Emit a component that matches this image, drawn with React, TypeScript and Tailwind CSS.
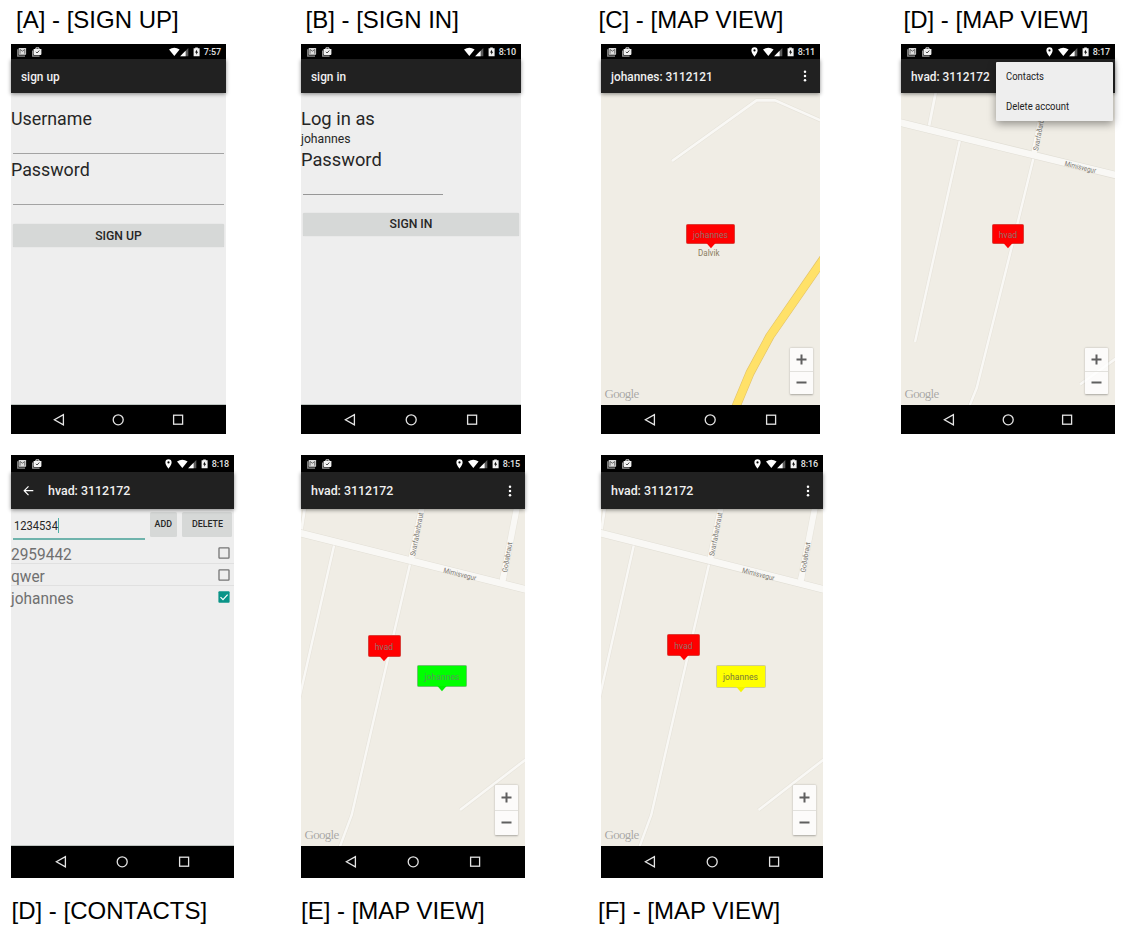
import React from "react";

type Size = "sm" | "lg";

function MailIcon() {
  return (
    <svg width="10" height="10" viewBox="0 0 10 10" fill="none">
      <path d="M0.8 2.2V9.1H8" stroke="#8f8f8f" strokeWidth="1.3" />
      <rect x="1.7" y="0.9" width="7.4" height="6.8" rx="0.6" fill="#dcdcdc" />
      <path d="M3 6.7V2.5L5.4 4.2L7.8 2.5V6.7" stroke="#5a5a5a" strokeWidth="0.9" />
    </svg>
  );
}

function WorkIcon() {
  return (
    <svg width="10" height="10" viewBox="0 0 10 10" fill="none">
      <path d="M0.7 3.4V9.1H7.6" stroke="#a0a0a0" strokeWidth="1.2" />
      <path d="M3.9 2.2V0.9H7V2.2" stroke="#f0f0f0" strokeWidth="1" />
      <path d="M1.6 1.9H9.4V7.3L8.8 7.9H2.2L1.6 7.3Z" fill="#f4f4f4" />
      <path d="M3.9 4.8L5.1 6L7.3 3.5" stroke="#333" strokeWidth="0.9" />
    </svg>
  );
}

function StatusBar({ size, time, gps = false }: { size: Size; time: string; gps?: boolean }) {
  return (
    <div
      className={`flex shrink-0 items-center bg-black pl-[6px] pr-[5px] text-white ${
        size === "sm" ? "h-[15px]" : "h-[17px]"
      }`}
    >
      <MailIcon />
      <div className="w-[4.5px]" />
      <WorkIcon />
      <div className="flex-1" />
      {gps && (
        <svg className="mr-[5px]" width="7" height="10" viewBox="0 0 7 10">
          <path
            d="M3.5 0.3A3.1 3.1 0 0 0 0.4 3.4C0.4 5.6 3.5 9.6 3.5 9.6S6.6 5.6 6.6 3.4A3.1 3.1 0 0 0 3.5 0.3ZM3.5 4.5A1.1 1.1 0 1 1 3.5 2.3A1.1 1.1 0 0 1 3.5 4.5Z"
            fill="#fff"
          />
        </svg>
      )}
      <svg width="20" height="10" viewBox="0 0 20 10">
        <path d="M0 2.5Q5.3 -1.2 10.6 2.5L5.3 9Z" fill="#fff" />
        <path d="M19.3 1V9.2H11.2Z" fill="#5c5c5c" />
        <path d="M16.6 3.7V9.2H11.2Z" fill="#fff" />
      </svg>
      <svg className="ml-[4px] mr-[3px]" width="7" height="10" viewBox="0 0 7 10">
        <path d="M2.2 0.4H4.8V1.2H6.6V9.3H0.6V1.2H2.2Z" fill="#f2f2f2" />
        <path d="M4.1 2.6L2 5.6H3.3V7.8L5.1 4.8H3.9Z" fill="#000" />
      </svg>
      <span className="w-[18px] text-right text-[9px] font-medium leading-[10px] tracking-[-0.1px] text-[#e4e4e4]">
        {time}
      </span>
    </div>
  );
}

function AppBar({
  size,
  title,
  back = false,
  menu = false,
}: {
  size: Size;
  title: string;
  back?: boolean;
  menu?: boolean;
}) {
  return (
    <div
      className={`relative z-10 flex shrink-0 items-center bg-[#212121] shadow-[0_1px_4px_rgba(0,0,0,0.45)] ${
        size === "sm" ? "h-[34px]" : "h-[37px]"
      } ${back ? "pl-[12px]" : "pl-[9.5px]"}`}
    >
      {back && (
        <svg className="mr-[14px]" width="11" height="12" viewBox="0 0 11 12" fill="none">
          <path d="M10.3 5.7H1.4M5.5 1.3L1.2 5.7L5.5 10.1" stroke="#fff" strokeWidth="1.2" />
        </svg>
      )}
      <span
        className={`origin-left whitespace-nowrap pt-px font-medium leading-[16px] text-[#f0f0f0] ${
          size === "sm" ? "scale-x-[0.965] text-[12.3px]" : "scale-x-[0.94] text-[13.2px]"
        }`}
      >
        {title}
      </span>
      <div className="flex-1" />
      {menu && (
        <svg className="mr-[13px]" width="4" height="14" viewBox="0 0 4 14" fill="#fff">
          <circle cx="2" cy="2.7" r="1.25" />
          <circle cx="2" cy="7" r="1.25" />
          <circle cx="2" cy="11.3" r="1.25" />
        </svg>
      )}
    </div>
  );
}

function NavBar({ size }: { size: Size }) {
  return (
    <div
      className={`grid shrink-0 grid-cols-3 place-items-center bg-black px-[8.4%] ${
        size === "sm" ? "h-[29px]" : "h-[32px]"
      }`}
    >
      <svg width="14" height="14" viewBox="0 0 14 14" fill="none" stroke="#e4e4e4" strokeWidth="1.3">
        <path d="M11.4 1.6V11.8L2.4 6.7Z" />
      </svg>
      <svg width="14" height="14" viewBox="0 0 14 14" fill="none" stroke="#e4e4e4" strokeWidth="1.3">
        <circle cx="7.2" cy="6.8" r="5" />
      </svg>
      <svg width="14" height="14" viewBox="0 0 14 14" fill="none" stroke="#e4e4e4" strokeWidth="1.3">
        <rect x="2.6" y="2.2" width="9" height="9" />
      </svg>
    </div>
  );
}

function Phone({
  size,
  width,
  children,
}: {
  size: Size;
  width: string;
  children: React.ReactNode;
}) {
  return (
    <div className={`relative flex flex-col ${size === "sm" ? "h-[390px]" : "h-[423px]"} ${width}`}>
      {children}
    </div>
  );
}

function Body({ children }: { children: React.ReactNode }) {
  return (
    <div className="min-h-0 flex-1 border-b border-[#bfc5c2] bg-[#eeeeee] text-[#262626]">{children}</div>
  );
}

function MapBody({ children }: { children: React.ReactNode }) {
  return <div className="relative min-h-0 flex-1 overflow-hidden bg-[#f0ede5]">{children}</div>;
}

function Pin({
  place,
  colors,
  tip,
  name,
}: {
  place: string;
  colors: string;
  tip: string;
  name: string;
}) {
  return (
    <div className={`absolute flex flex-col items-center ${place}`}>
      <div
        className={`flex w-full flex-1 items-center justify-center rounded-[1.5px] border pt-px text-[8.6px] leading-[10px] ${colors}`}
      >
        {name}
      </div>
      <svg className="-mt-px shrink-0" width="10" height="6" viewBox="0 0 10 6">
        <path d="M0.4 0H9.6L5 5.2Z" className={tip} />
      </svg>
    </div>
  );
}

const RED = "border-[#d8403a] bg-[#ff0000] text-[#94706a]";

function ZoomControl({ size }: { size: Size }) {
  const cell =
    size === "sm" ? "flex h-[23px] items-center justify-center" : "flex h-[25px] items-center justify-center";
  return (
    <div className="absolute bottom-[11.5px] right-[7.5px] w-[23px] rounded-[1px] bg-white/80 shadow-[0_0.5px_2px_rgba(0,0,0,0.3)]">
      <div className={cell}>
        <svg width="11" height="11" viewBox="0 0 11 11" stroke="#5f5f5f" strokeWidth="2">
          <path d="M5.5 0.5V10.5M0.5 5.5H10.5" />
        </svg>
      </div>
      <div className={`${cell} border-t border-[#e2e1dd]`}>
        <svg width="11" height="11" viewBox="0 0 11 11" stroke="#5f5f5f" strokeWidth="2">
          <path d="M0.5 5.5H10.5" />
        </svg>
      </div>
    </div>
  );
}

function Road({ d, w }: { d: string; w: number }) {
  return (
    <>
      <path d={d} stroke="#e6e3da" strokeWidth={w + 1.1} fill="none" />
      <path d={d} stroke="#f9f8f5" strokeWidth={w} fill="none" />
    </>
  );
}

function StreetName({
  x,
  y,
  angle,
  length,
  children,
}: {
  x: number;
  y: number;
  angle: number;
  length: number;
  children: string;
}) {
  return (
    <text
      transform={`translate(${x} ${y}) rotate(${angle})`}
      fontSize="7.2"
      fill="#7a766e"
      textLength={length}
      lengthAdjust="spacingAndGlyphs"
    >
      {children}
    </text>
  );
}

function GoogleMark({ size }: { size: Size }) {
  return (
    <div
      className={`absolute left-[3.5px] font-['Liberation_Serif',serif] text-[13px] leading-[14px] tracking-[-0.7px] text-[#a9a7a2] [text-shadow:0_0_1px_#fff] ${
        size === "sm" ? "bottom-[4px]" : "bottom-[4.5px]"
      }`}
    >
      Google
    </div>
  );
}

function VillageMap() {
  return (
    <svg className="block h-full w-full" viewBox="601 93 219 312" preserveAspectRatio="none">
      <Road d="M672 161L756.5 100.3H775L822 121" w={2.7} />
      <path
        d="M824 258L770 336L750 373L735 409"
        fill="none"
        stroke="#e3c36a"
        strokeWidth="9"
        strokeLinejoin="round"
      />
      <path
        d="M824 258L770 336L750 373L735 409"
        fill="none"
        stroke="#ffe168"
        strokeWidth="7.8"
        strokeLinejoin="round"
      />
      <text
        x="698"
        y="256.2"
        fontSize="8.4"
        fill="#8a7c5e"
        textLength="21.5"
        lengthAdjust="spacingAndGlyphs"
      >
        Dalvik
      </text>
    </svg>
  );
}

function NearStreetsMap() {
  return (
    <svg className="block h-full w-full" viewBox="901 93 214 312" preserveAspectRatio="none">
      <Road d="M936 91L928.6 128" w={2.8} />
      <Road d="M960 140L915 342" w={2.5} />
      <Road d="M1033.5 158L1011 250L976.7 388L969 407" w={2.5} />
      <Road d="M1046 93L1033.7 155" w={5.4} />
      <Road d="M1080 384.5L1116 358.5" w={2.6} />
      <path d="M898 122L1118 175.7" stroke="#e1ded5" strokeWidth="7.8" />
      <path d="M898 122L1118 175.7" stroke="#f9f8f5" strokeWidth="6.6" />
      <path d="M1035.5 146L1033.7 155" stroke="#f9f8f5" strokeWidth="5.4" />
      <StreetName x={1038} y={151} angle={-79} length={43}>
        Svarfaðarbraut
      </StreetName>
      <StreetName x={1064.3} y={165.8} angle={13.5} length={32}>
        Mimisvegur
      </StreetName>
    </svg>
  );
}

function StreetsMap() {
  return (
    <svg className="block h-full w-full" viewBox="301 509 224 337" preserveAspectRatio="none">
      <Road d="M305 507L301.5 530" w={2.8} />
      <Road d="M334.6 543L299 700" w={2.5} />
      <Road d="M410.5 562L378.3 700L351.7 815L339 849" w={2.5} />
      <Road d="M422 507L411 560" w={5.8} />
      <Road d="M517 507L502 584" w={6} />
      <Road d="M460 810L527 758.5" w={2.6} />
      <path d="M298 532.5L528 590" stroke="#e1ded5" strokeWidth="8" />
      <path d="M298 532.5L528 590" stroke="#f9f8f5" strokeWidth="6.8" />
      <path d="M412.6 552L411 560M503.6 576L502 584" stroke="#f9f8f5" strokeWidth="5.8" />
      <StreetName x={415} y={556.3} angle={-79} length={44}>
        Svarfaðarbraut
      </StreetName>
      <StreetName x={507} y={572.7} angle={-80} length={30.5}>
        Goðabraut
      </StreetName>
      <StreetName x={443} y={572.5} angle={14} length={33.5}>
        Mimisvegur
      </StreetName>
    </svg>
  );
}

function Caption({ className, children }: { className: string; children: string }) {
  return (
    <div
      className={`whitespace-nowrap font-['Liberation_Sans',Arial,sans-serif] text-[24px] leading-[28px] text-black ${className}`}
    >
      {children}
    </div>
  );
}

function FieldLabel({ className, children }: { className: string; children: string }) {
  return <div className={`origin-left text-[18px] leading-[20px] ${className}`}>{children}</div>;
}

function WideButton({ className, children }: { className: string; children: string }) {
  return (
    <div
      className={`mx-[2px] flex h-[23px] items-center justify-center rounded-[1.5px] bg-[#d6d8d7] text-[12.2px] font-medium leading-[16px] shadow-[0_0_1px_rgba(0,0,0,0.2)] ${className}`}
    >
      {children}
    </div>
  );
}

function SignUp() {
  return (
    <Phone size="sm" width="w-[215px]">
      <StatusBar size="sm" time="7:57" />
      <AppBar size="sm" title="sign up" />
      <Body>
        <FieldLabel className="mt-[16px] scale-x-[0.99]">Username</FieldLabel>
        <div className="mx-[2px] mt-[24px] h-px bg-[#a3a3a3]" />
        <FieldLabel className="mt-[6px] scale-x-[0.99]">Password</FieldLabel>
        <div className="mx-[2px] mt-[24px] h-px bg-[#a3a3a3]" />
        <WideButton className="mt-[19px]">SIGN UP</WideButton>
      </Body>
      <NavBar size="sm" />
    </Phone>
  );
}

function SignIn() {
  return (
    <Phone size="sm" width="w-[220px]">
      <StatusBar size="sm" time="8:10" />
      <AppBar size="sm" title="sign in" />
      <Body>
        <FieldLabel className="mt-[16px] scale-x-[1.02]">Log in as</FieldLabel>
        <div className="mt-[2.4px] text-[12.2px] leading-[16px]">johannes</div>
        <FieldLabel className="mt-[2.6px] scale-x-[1.015]">Password</FieldLabel>
        <div className="ml-[2px] mt-[24px] h-px w-[140px] bg-[#979797]" />
        <WideButton className="mt-[18px]">SIGN IN</WideButton>
      </Body>
      <NavBar size="sm" />
    </Phone>
  );
}

const contacts = [
  { name: "2959442", checked: false },
  { name: "qwer", checked: false },
  { name: "johannes", checked: true },
];

function Contacts() {
  return (
    <Phone size="lg" width="w-[223px]">
      <StatusBar size="lg" time="8:18" gps />
      <AppBar size="lg" title="hvad: 3112172" back />
      <Body>
        <div className="flex h-[33.5px] items-start pl-[2px] pr-[2px] pt-[3px]">
          <div className="flex h-[28px] w-[132px] items-center border-b-2 border-[#6fb3ac]">
            <span className="inline-block origin-left scale-x-[0.94] pl-[1px] pt-px text-[11.9px] leading-[16px]">
              1234534
            </span>
            <span className="-ml-[3px] h-[15px] w-[1.5px] bg-[#4fb0a6]" />
          </div>
          <div className="ml-[5px] flex h-[25px] w-[27px] items-center justify-center rounded-[1.5px] bg-[#d6d8d7] text-[9.4px] font-medium">
            <span className="scale-x-[0.94]">ADD</span>
          </div>
          <div className="ml-[5px] flex h-[25px] flex-1 items-center justify-center rounded-[1.5px] bg-[#d6d8d7] text-[9.4px] font-medium">
            <span className="scale-x-[0.94]">DELETE</span>
          </div>
        </div>
        {contacts.map((c, i) => (
          <div
            key={c.name}
            className={`flex h-[21.7px] items-center justify-between pr-[4px] ${
              i < 2 ? "border-b border-[#e0e0e0]" : ""
            }`}
          >
            <span className="origin-left scale-x-[0.92] pt-[2px] text-[16.8px] leading-[20px] text-[#707070]">
              {c.name}
            </span>
            <svg width="12" height="12" viewBox="0 0 12 12" fill="none">
              {c.checked ? (
                <>
                  <rect x="0.4" y="0.2" width="11.2" height="11.6" rx="1" fill="#0a9488" />
                  <path d="M2.5 6.1L5 8.7L9.6 3.6" stroke="#fff" strokeWidth="1.2" />
                </>
              ) : (
                <rect x="1" y="0.8" width="10" height="10.4" rx="0.6" stroke="#757575" strokeWidth="1.3" />
              )}
            </svg>
          </div>
        ))}
      </Body>
      <NavBar size="lg" />
    </Phone>
  );
}

function VillageScreen() {
  return (
    <Phone size="sm" width="w-[219px]">
      <StatusBar size="sm" time="8:11" gps />
      <AppBar size="sm" title="johannes: 3112121" menu />
      <MapBody>
        <VillageMap />
        <GoogleMark size="sm" />
        <ZoomControl size="sm" />
        <Pin place="left-[85px] top-[131px] h-[25px] w-[49px]" colors={RED} tip="fill-[#ff0000]" name="johannes" />
      </MapBody>
      <NavBar size="sm" />
    </Phone>
  );
}

function MenuScreen() {
  return (
    <Phone size="sm" width="w-[214px]">
      <StatusBar size="sm" time="8:17" gps />
      <AppBar size="sm" title="hvad: 3112172" />
      <MapBody>
        <NearStreetsMap />
        <GoogleMark size="sm" />
        <ZoomControl size="sm" />
        <Pin place="left-[91px] top-[131px] h-[25px] w-[32px]" colors={RED} tip="fill-[#ff0000]" name="hvad" />
      </MapBody>
      <NavBar size="sm" />
      <div className="absolute right-[2px] top-[17.5px] z-20 flex h-[59px] w-[117px] flex-col rounded-[1px] bg-[#eeeeee] pl-[9.5px] text-[10.2px] text-[#222] shadow-[0_3px_8px_rgba(0,0,0,0.4)]">
        <div className="flex h-[30px] origin-left scale-x-[0.93] items-center pt-px">Contacts</div>
        <div className="flex h-[29px] origin-left scale-x-[0.93] items-center pt-px">Delete account</div>
      </div>
    </Phone>
  );
}

function FriendScreen({
  width,
  time,
  pins,
}: {
  width: string;
  time: string;
  pins: React.ReactNode;
}) {
  return (
    <Phone size="lg" width={width}>
      <StatusBar size="lg" time={time} gps />
      <AppBar size="lg" title="hvad: 3112172" menu />
      <MapBody>
        <StreetsMap />
        <GoogleMark size="lg" />
        <ZoomControl size="lg" />
        {pins}
      </MapBody>
      <NavBar size="lg" />
    </Phone>
  );
}

export default function App() {
  return (
    <div className="flex h-[936px] w-[1130px] flex-col overflow-hidden bg-white pl-[11px] font-['Roboto',sans-serif]">
      <div className="grid shrink-0 grid-cols-[290px_300px_300px_219px]">
        <div className="flex flex-col">
          <Caption className="h-[44px] pl-[5px] pt-[5.5px]">[A] - [SIGN UP]</Caption>
          <SignUp />
        </div>
        <div className="flex flex-col">
          <Caption className="h-[44px] pl-[4.5px] pt-[5.5px]">[B] - [SIGN IN]</Caption>
          <SignIn />
        </div>
        <div className="flex flex-col">
          <Caption className="-ml-[2.5px] h-[44px] pt-[5.5px]">[C] - [MAP VIEW]</Caption>
          <VillageScreen />
        </div>
        <div className="flex flex-col">
          <Caption className="h-[44px] pl-[2.5px] pt-[5.5px]">[D] - [MAP VIEW]</Caption>
          <MenuScreen />
        </div>
      </div>
      <div className="mt-[21px] grid shrink-0 grid-cols-[290px_300px_300px]">
        <div className="flex flex-col">
          <Contacts />
          <Caption className="pl-[0.5px] pt-[18.5px]">[D] - [CONTACTS]</Caption>
        </div>
        <div className="flex flex-col">
          <FriendScreen
            width="w-[224px]"
            time="8:15"
            pins={
              <>
                <Pin place="left-[66.5px] top-[126px] h-[27px] w-[33px]" colors={RED} tip="fill-[#ff0000]" name="hvad" />
                <Pin
                  place="left-[116px] top-[156px] h-[27px] w-[50px]"
                  colors="border-[#6fc36f] bg-[#00ff00] text-[#5c965c]"
                  tip="fill-[#00f000]"
                  name="johannes"
                />
              </>
            }
          />
          <Caption className="pt-[18.5px]">[E] - [MAP VIEW]</Caption>
        </div>
        <div className="flex flex-col">
          <FriendScreen
            width="w-[222px]"
            time="8:16"
            pins={
              <>
                <Pin place="left-[66px] top-[125px] h-[27px] w-[33px]" colors={RED} tip="fill-[#ff0000]" name="hvad" />
                <Pin
                  place="left-[114.5px] top-[156px] h-[27.5px] w-[50px]"
                  colors="border-[#cdcd98] bg-[#ffff00] text-[#77773c]"
                  tip="fill-[#f4f400]"
                  name="johannes"
                />
              </>
            }
          />
          <Caption className="-ml-[3px] pt-[18.5px]">[F] - [MAP VIEW]</Caption>
        </div>
      </div>
    </div>
  );
}
